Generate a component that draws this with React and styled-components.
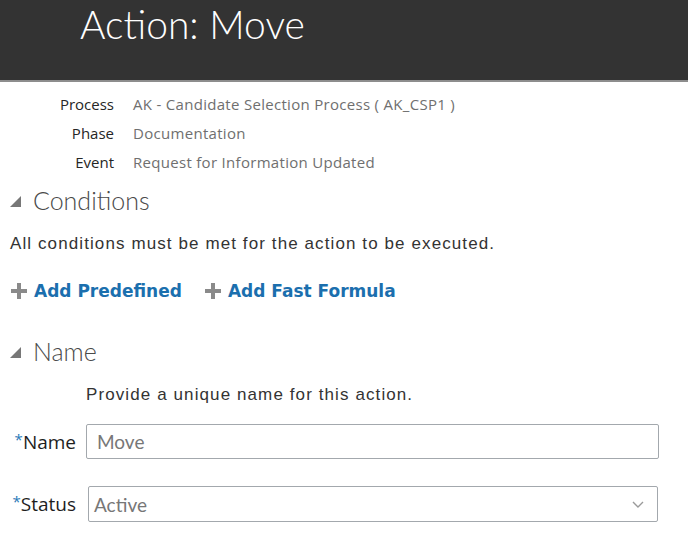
import React from "react";
import styled, { createGlobalStyle } from "styled-components";

const GlobalStyle = createGlobalStyle`
  body {
    margin: 0;
    background: #ffffff;
    font-family: "Open Sans", Lato, sans-serif;
  }
`;

const SPage = styled.div`
  width: 688px;
  height: 545px;
  overflow: hidden;
  background: #ffffff;
`;

const SHeader = styled.header`
  height: 82px;
  background: #333333;
  border-bottom: 2px solid #8d8d8d;
  padding-left: 80px;
  box-sizing: border-box;
`;

const STitle = styled.h1`
  margin: 0;
  font-family: Lato, sans-serif;
  font-weight: 300;
  font-size: 39px;
  line-height: 48px;
  color: #ffffff;
`;

const SInfoGrid = styled.div`
  display: grid;
  grid-template-columns: 114px auto;
  column-gap: 19px;
  margin-top: 8px;
  font-family: "Open Sans", sans-serif;
  font-size: 15px;
  line-height: 29px;
`;

const SInfoLabel = styled.div`
  text-align: right;
  color: #262626;
`;

const SInfoValue = styled.div`
  color: #6f6f6f;
  letter-spacing: 0.3px;
`;

const SSection = styled.section`
  padding-left: 10px;
  margin-top: ${(p) => p.$top || 0}px;
`;

const SSectionTitle = styled.h2`
  display: flex;
  align-items: center;
  gap: 12px;
  margin: 0;
  font-family: Lato, sans-serif;
  font-weight: 300;
  font-size: 25px;
  line-height: 32px;
  color: #4a4a4a;
`;

const STriangle = styled.span`
  width: 0;
  height: 0;
  border-left: 11px solid transparent;
  border-bottom: 11px solid #777777;
  margin-top: 2px;
`;

const SText = styled.p`
  margin: ${(p) => p.$margin || "0"};
  font-family: "Liberation Sans", Arial, sans-serif;
  font-size: 17px;
  letter-spacing: 1.1px;
  color: #333333;
`;

const SLinkRow = styled.div`
  display: flex;
  gap: 22px;
  margin-top: 27px;
`;

const SLink = styled.a`
  display: flex;
  align-items: center;
  gap: 6px;
  font-family: "DejaVu Sans", Verdana, sans-serif;
  font-weight: bold;
  font-size: 17px;
  color: #1b6fae;
  text-decoration: none;
  cursor: pointer;
`;

const SFieldRow = styled.div`
  display: flex;
  align-items: center;
  margin-top: ${(p) => p.$top}px;
`;

const SFieldLabel = styled.label`
  width: 76px;
  text-align: right;
  font-family: "Open Sans", sans-serif;
  font-size: 19px;
  color: #1e1e1e;
  margin-right: ${(p) => p.$gap}px;
  white-space: nowrap;
`;

const SReq = styled.span`
  color: #2a7ab8;
  font-size: 15px;
  vertical-align: top;
`;

const SInput = styled.div`
  width: ${(p) => p.$width}px;
  height: ${(p) => p.$height}px;
  box-sizing: border-box;
  border: 1px solid #a3a8ad;
  border-radius: 2px;
  padding: 0 12px 0 ${(p) => p.$pad}px;
  display: flex;
  align-items: center;
  justify-content: space-between;
  font-family: Lato, sans-serif;
  font-size: 19px;
  color: #777777;
  background: #ffffff;
`;

const Plus = () => (
  <svg width="18" height="18" viewBox="0 0 18 18">
    <rect x="7" y="1" width="4" height="16" fill="#8a8a8a" />
    <rect x="1" y="7" width="16" height="4" fill="#8a8a8a" />
  </svg>
);

const Chevron = () => (
  <svg width="14" height="10" viewBox="0 0 14 10">
    <path d="M2 3 L7 8 L12 3" fill="none" stroke="#9a9a9a" strokeWidth="1.4" />
  </svg>
);

const info = [
  ["Process", "AK - Candidate Selection Process ( AK_CSP1 )"],
  ["Phase", "Documentation"],
  ["Event", "Request for Information Updated"],
];

const App = () => {
  return (
    <>
      <GlobalStyle />
      <SPage>
        <SHeader>
          <STitle>Action: Move</STitle>
        </SHeader>

        <SInfoGrid>
          {info.map(([label, value]) => (
            <React.Fragment key={label}>
              <SInfoLabel>{label}</SInfoLabel>
              <SInfoValue>{value}</SInfoValue>
            </React.Fragment>
          ))}
        </SInfoGrid>

        <SSection $top={7}>
          <SSectionTitle>
            <STriangle />
            Conditions
          </SSectionTitle>
          <SText $margin="18px 0 0">All conditions must be met for the action to be executed.</SText>
          <SLinkRow>
            <SLink>
              <Plus />
              Add Predefined
            </SLink>
            <SLink>
              <Plus />
              Add Fast Formula
            </SLink>
          </SLinkRow>
        </SSection>

        <SSection $top={34}>
          <SSectionTitle>
            <STriangle />
            Name
          </SSectionTitle>
          <SText $margin="18px 0 0 76px">Provide a unique name for this action.</SText>
        </SSection>

        <SFieldRow $top={19}>
          <SFieldLabel $gap={10}>
            <SReq>*</SReq>Name
          </SFieldLabel>
          <SInput $width={573} $height={35} $pad={10}>Move</SInput>
        </SFieldRow>

        <SFieldRow $top={27}>
          <SFieldLabel $gap={12}>
            <SReq>*</SReq>Status
          </SFieldLabel>
          <SInput $width={570} $height={36} $pad={5}>
            Active
            <Chevron />
          </SInput>
        </SFieldRow>
      </SPage>
    </>
  );
};

export default App;
